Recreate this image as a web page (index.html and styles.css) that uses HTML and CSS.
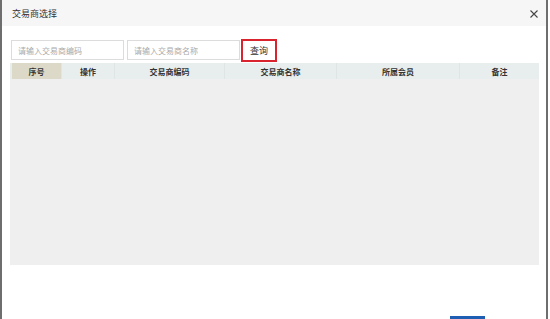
FILE: index.html
```html
<!DOCTYPE html>
<html lang="zh-CN">

<head>
    <meta charset="UTF-8">
    <meta name="viewport" content="width=device-width, initial-scale=1.0">
    <title>交易商选择</title>
    <link rel="stylesheet" href="styles.css">
</head>

<body>
    <div class="dialog">
        <!-- Title bar -->
        <div class="titlebar">
            <span class="title">交易商选择</span>
            <svg class="close" width="8" height="8" viewBox="0 0 8 8">
                <path d="M0.5 0.5 L7.5 7.5 M7.5 0.5 L0.5 7.5" stroke="#444" stroke-width="1.1" fill="none" />
            </svg>
        </div>

        <!-- Search fields -->
        <div class="toolbar">
            <input type="text" class="field" placeholder="请输入交易商编码">
            <input type="text" class="field" placeholder="请输入交易商名称">
            <button class="search-button">查询</button>
        </div>

        <!-- Result grid -->
        <div class="grid">
            <div class="grid-head">
                <div class="col col-no active">序号</div>
                <div class="col col-op">操作</div>
                <div class="col col-code">交易商编码</div>
                <div class="col col-name">交易商名称</div>
                <div class="col col-member">所属会员</div>
                <div class="col col-note">备注</div>
            </div>
            <div class="grid-body"></div>
        </div>

        <div class="footer">
            <span class="footer-button"></span>
        </div>
    </div>
</body>

</html>
```

FILE: styles.css
```css
body {
    margin: 0;
    padding: 0;
    background-color: #ffffff;
    font-family: "Noto Sans CJK SC", "Noto Sans", sans-serif;
    color: #333;
}

.dialog {
    box-sizing: border-box;
    width: 548px;
    height: 319px;
    border-left: 2px solid #6e6e6e;
    border-right: 2px solid #6e6e6e;
    background-color: #ffffff;
    display: flex;
    flex-direction: column;
    overflow: hidden;
}

/* Title bar */
.titlebar {
    height: 26px;
    background-color: #f6f6f6;
    display: flex;
    align-items: center;
    justify-content: space-between;
    padding: 0 8px 0 10px;
}

.title {
    font-size: 9px;
    color: #333;
}

.close {
    display: block;
    margin-top: 1px;
}

/* Search fields */
.toolbar {
    display: flex;
    align-items: flex-start;
    gap: 3px;
    padding: 14px 0 0 9px;
}

.field {
    box-sizing: border-box;
    width: 113px;
    height: 20px;
    border: 1px solid #dcdcdc;
    padding: 0 6px;
    font-size: 8px;
    font-family: "Noto Sans CJK SC", sans-serif;
    color: #333;
    outline: none;
}

.field::placeholder {
    color: #aaa;
}

.search-button {
    box-sizing: border-box;
    width: 36px;
    height: 23px;
    margin: -1px 0 0 -2px;
    border: 2px solid #d9232e;
    background-color: #ffffff;
    font-size: 9px;
    font-family: "Noto Sans CJK SC", sans-serif;
    color: #333;
    padding: 0;
}

/* Result grid */
.grid {
    width: 529px;
    margin: 1px 0 0 8px;
    display: flex;
    flex-direction: column;
}

.grid-head {
    height: 16px;
    display: flex;
    background-color: #e8eeee;
}

.col {
    box-sizing: border-box;
    border-right: 1px solid #dfe5e5;
    font-size: 8px;
    font-weight: bold;
    color: #333;
    display: flex;
    align-items: center;
    justify-content: center;
}

.col.active {
    background-color: #dcd9c8;
    margin-left: 2px;
}

.col-no { width: 50px; }
.col-op { width: 53px; }
.col-code { width: 110px; }
.col-name { width: 112px; }
.col-member { width: 123px; }
.col-note { width: 79px; border-right: none; }

.grid-body {
    height: 186px;
    background-color: #efefef;
}

.footer {
    flex: 1;
    display: flex;
    justify-content: flex-end;
    align-items: flex-end;
    padding-right: 61px;
}

.footer-button {
    width: 35px;
    height: 3px;
    background-color: #1e5fb4;
}
```
